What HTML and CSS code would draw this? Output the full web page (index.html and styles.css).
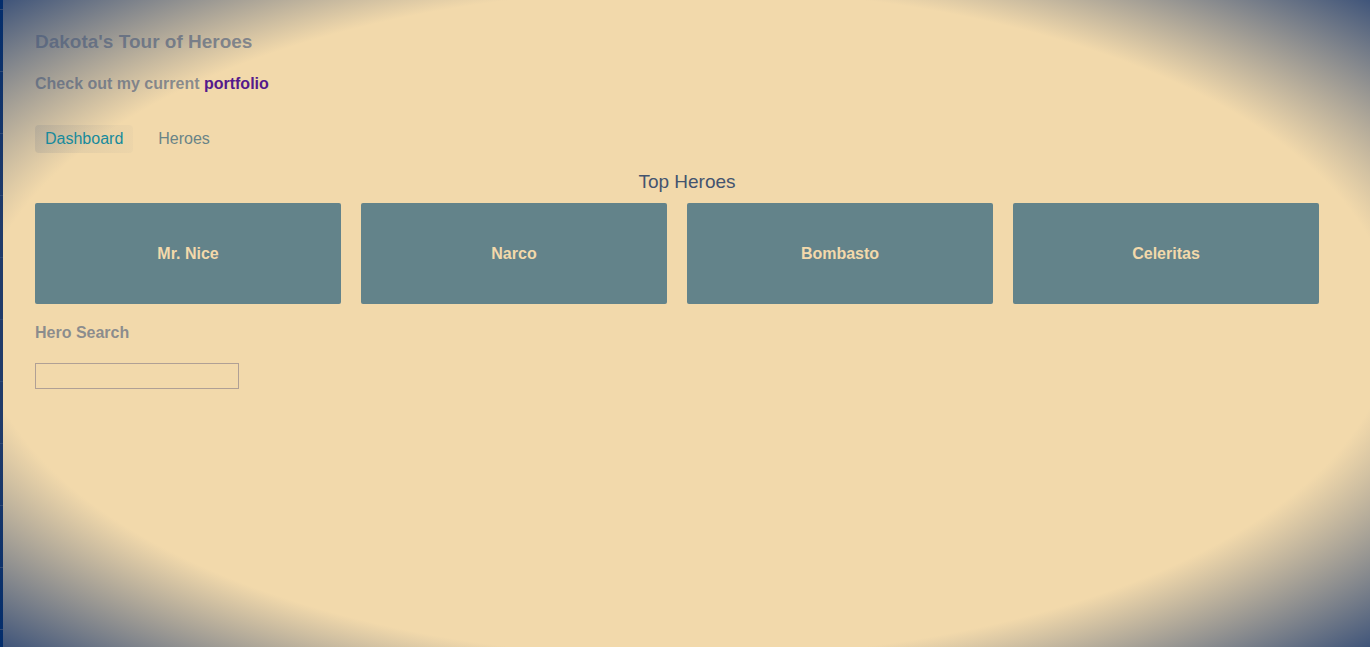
FILE: index.html
```html
<!DOCTYPE html>
<html lang="en">
<head>
<meta charset="utf-8">
<title>Tour of Heroes</title>
<link rel="stylesheet" href="styles.css">
</head>
<body>
<div class="app">
  <header>
    <h1 class="title">Dakota's Tour of Heroes</h1>
    <h2 class="intro">Check out my current <a class="portfolio" href="#portfolio">portfolio</a></h2>
    <nav class="nav">
      <a class="nav-link active" href="#dashboard">Dashboard</a>
      <a class="nav-link" href="#heroes">Heroes</a>
    </nav>
  </header>
  <main>
    <h3 class="section-title">Top Heroes</h3>
    <div class="heroes">
      <a class="hero" href="#nice">Mr. Nice</a>
      <a class="hero" href="#narco">Narco</a>
      <a class="hero" href="#bombasto">Bombasto</a>
      <a class="hero" href="#celeritas">Celeritas</a>
    </div>
    <div class="search">
      <label class="search-label" for="search-box">Hero Search</label>
      <input class="search-box" id="search-box" type="text">
    </div>
  </main>
</div>
</body>
</html>
```

FILE: styles.css
```css
* {
  box-sizing: border-box;
}

body {
  margin: 0;
  padding-left: 3px;
  font-family: "Liberation Sans", Arial, sans-serif;
  font-size: 16px;
  line-height: 18px;
  background-color: #15336a;
  background-image:
    linear-gradient(transparent 61px, #304a76 61px),
    linear-gradient(#032d6c, #213b69 35%, #213b69 65%, #032d6c);
  background-position: 0 10px, 0 0;
  background-size: 3px 62px, 3px 100%;
  background-repeat: repeat-y, no-repeat;
}

.app {
  min-height: 100vh;
  padding: 31px 31px 32px 32px;
  background-image: radial-gradient(ellipse farthest-corner at center, #f2d9ab 73%, #40557a 100%);
}

.title,
.intro,
.section-title {
  margin: 0;
}

.title {
  font-size: 19px;
  line-height: 22px;
  color: rgba(70, 88, 121, 0.6);
}

.intro {
  margin-top: 21px;
  font-size: 16px;
  line-height: 20px;
  color: rgba(70, 88, 121, 0.6);
}

.portfolio {
  color: #551a8b;
  text-decoration: none;
}

.nav {
  display: flex;
  gap: 15px;
  margin-top: 31px;
}

.nav-link {
  padding: 5px 10px;
  border-radius: 4px;
  color: #6a8487;
  text-decoration: none;
}

.nav-link.active {
  color: #178a9c;
  background-image: linear-gradient(to right, rgba(70, 88, 121, 0.12), rgba(70, 88, 121, 0.03));
}

.section-title {
  margin-top: 17px;
  font-size: 19px;
  font-weight: 400;
  line-height: 24px;
  text-align: center;
  color: #44546f;
}

.heroes {
  display: grid;
  grid-template-columns: repeat(4, 1fr);
  gap: 20px;
  margin-top: 9px;
  padding-right: 20px;
}

.hero {
  display: flex;
  align-items: center;
  justify-content: center;
  min-height: 101px;
  border-radius: 2px;
  background-color: rgba(83, 121, 134, 0.9);
  color: #f3d9ab;
  font-weight: 700;
  text-decoration: none;
}

.search {
  display: flex;
  flex-direction: column;
  align-items: flex-start;
  gap: 21px;
  margin-top: 20px;
}

.search-label {
  font-weight: 700;
  color: rgba(70, 88, 121, 0.6);
}

.search-box {
  width: 204px;
  height: 26px;
  padding: 4px;
  border: 1px solid #b0a095;
  border-radius: 0;
  background: transparent;
  color: #44546f;
  font: inherit;
}
```
